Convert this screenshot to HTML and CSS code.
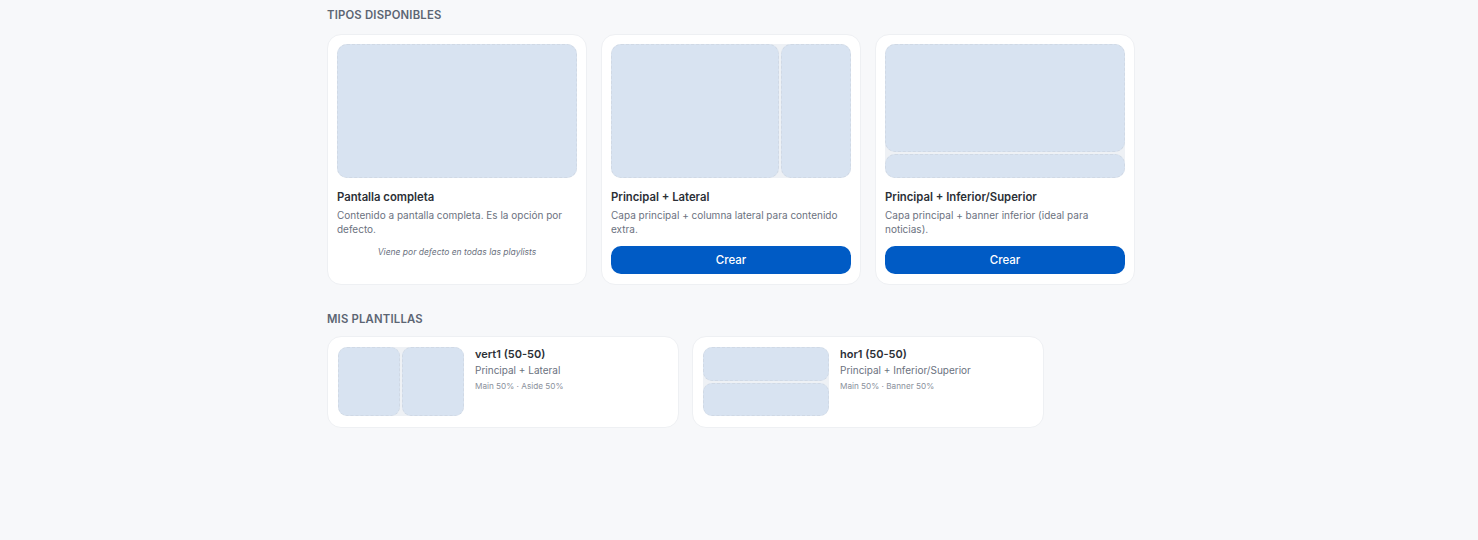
FILE: index.html
```html
<!DOCTYPE html>
<html lang="es">
<head>
    <meta charset="UTF-8">
    <title>Plantillas</title>
    <meta name="viewport" content="width=device-width, initial-scale=1.0" />
    <link rel="stylesheet" href="styles.css">
</head>
<body>
<div class="page">
    <h2 class="section-title">Tipos disponibles</h2>
    <div class="types">
        <div class="type-card">
            <div class="preview">
                <div class="zone"></div>
            </div>
            <div class="type-name">Pantalla completa</div>
            <div class="type-desc">Contenido a pantalla completa. Es la opción por defecto.</div>
            <div class="type-note">Viene por defecto en todas las playlists</div>
        </div>
        <div class="type-card">
            <div class="preview cols-70">
                <div class="zone"></div>
                <div class="zone"></div>
            </div>
            <div class="type-name">Principal + Lateral</div>
            <div class="type-desc">Capa principal + columna lateral para contenido extra.</div>
            <button class="btn-create">Crear</button>
        </div>
        <div class="type-card">
            <div class="preview rows-80">
                <div class="zone"></div>
                <div class="zone"></div>
            </div>
            <div class="type-name">Principal + Inferior/Superior</div>
            <div class="type-desc">Capa principal + banner inferior (ideal para noticias).</div>
            <button class="btn-create">Crear</button>
        </div>
    </div>

    <h2 class="section-title">Mis plantillas</h2>
    <div class="templates">
        <div class="tpl-card">
            <div class="thumb cols-50">
                <div class="zone"></div>
                <div class="zone"></div>
            </div>
            <div class="tpl-info">
                <div class="tpl-name">vert1 (50-50)</div>
                <div class="tpl-type">Principal + Lateral</div>
                <div class="tpl-meta">Main 50% · Aside 50%</div>
            </div>
        </div>
        <div class="tpl-card">
            <div class="thumb rows-50">
                <div class="zone"></div>
                <div class="zone"></div>
            </div>
            <div class="tpl-info">
                <div class="tpl-name">hor1 (50-50)</div>
                <div class="tpl-type">Principal + Inferior/Superior</div>
                <div class="tpl-meta">Main 50% · Banner 50%</div>
            </div>
        </div>
    </div>
</div>
</body>
</html>
```

FILE: styles.css
```css
body{
    margin:0;
    background:#f7f8fa;
    font-family: Inter, "Noto Sans", sans-serif;
    color:#2b2f36;
}
.page{
    width:824px;
    margin:0 auto;
    padding-top:8px;
}
.section-title{
    margin:0 0 11px;
    font-size:11.3px;
    font-weight:600;
    letter-spacing:0.2px;
    text-transform:uppercase;
    color:#5c6573;
    line-height:15px;
}

/* tipos */
.types{
    display:grid;
    grid-template-columns:repeat(3, 260px);
    gap:14px;
    margin-bottom:27px;
}
.types + .section-title{
    margin-bottom:9px;
}
.type-card{
    background:#fff;
    border:1px solid #eef0f3;
    border-radius:14px;
    padding:9px 9px 10px;
    display:flex;
    flex-direction:column;
}
.preview{
    display:flex;
    gap:2px;
    height:134px;
    background:#eef1f5;
    border-radius:10px;
}
.preview.rows-80{
    flex-direction:column;
}
.zone{
    flex:1;
    background:#d8e3f1;
    border:1px dashed #d0d9e5;
    border-radius:10px;
}
.cols-70 .zone:first-child{ flex:0 0 166px; }
.rows-80 .zone:first-child{ flex:0 0 106px; }

.type-name{
    margin-top:11px;
    font-size:11.3px;
    font-weight:600;
    line-height:16px;
    color:#2b2f36;
}
.type-desc{
    margin-top:3px;
    font-size:10px;
    line-height:14px;
    color:#6b7280;
}
.type-note{
    margin-top:11px;
    font-size:8.5px;
    font-style:italic;
    text-align:center;
    color:#6b7280;
}
.btn-create{
    margin-top:10px;
    height:28px;
    border:none;
    border-radius:10px;
    background:#005bc5;
    color:#fff;
    font-family:inherit;
    font-size:11.5px;
    font-weight:500;
}

/* mis plantillas */
.templates{
    display:grid;
    grid-template-columns:repeat(2, 352px);
    gap:13px;
}
.tpl-card{
    background:#fff;
    border:1px solid #eef0f3;
    border-radius:14px;
    padding:10px 10px 11px;
    display:flex;
    gap:11px;
}
.thumb{
    display:flex;
    gap:2px;
    width:126px;
    height:69px;
    background:#eef1f5;
    border-radius:10px;
    flex-shrink:0;
}
.thumb.rows-50{
    flex-direction:column;
}
.thumb .zone{
    border-radius:9px;
}
.tpl-name{
    font-size:11px;
    font-weight:600;
    line-height:15px;
    color:#2b2f36;
}
.tpl-type{
    margin-top:1px;
    font-size:10px;
    line-height:15px;
    color:#6b7280;
}
.tpl-meta{
    margin-top:2px;
    font-size:8.2px;
    line-height:12px;
    color:#8a919c;
}
```
